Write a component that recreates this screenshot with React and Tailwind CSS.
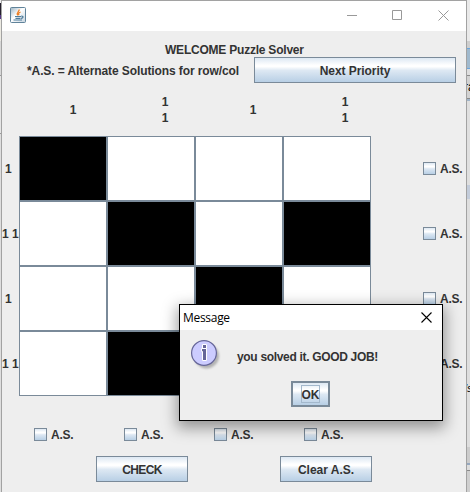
import React from "react";

const BOARD = [
  { clue: "1", cells: [1, 0, 0, 0] },
  { clue: "1 1", cells: [0, 1, 0, 1] },
  { clue: "1", cells: [0, 0, 1, 0] },
  { clue: "1 1", cells: [0, 1, 0, 0] },
];

const METAL = "bg-[linear-gradient(180deg,#dde8f3_0%,#ffffff_30%,#ffffff_36%,#dde8f3_52%,#b8cfe5_100%)]";

function Button({ className, children }) {
  return (
    <button className={`flex h-[26px] items-center justify-center border border-[#7a8a99] pt-[2px] leading-[14px] ${METAL} ${className}`}>
      {children}
    </button>
  );
}

function AltCheck() {
  return (
    <label className="flex h-[13px] items-center gap-1">
      <span className={`block size-[13px] shrink-0 border border-[#7a8a99] ${METAL}`} />
      <span className="pt-[2px] leading-[13px] tracking-[-0.25px]">A.S.</span>
    </label>
  );
}

function JavaIcon() {
  return (
    <svg width="16" height="16" viewBox="0 0 16 16" fill="none">
      <defs>
        <linearGradient id="java" x1="0" y1="0" x2="1" y2="1">
          <stop offset="0" stopColor="#9db4c3" />
          <stop offset=".45" stopColor="#ffffff" />
          <stop offset="1" stopColor="#c3d2dd" />
        </linearGradient>
      </defs>
      <rect x=".5" y=".5" width="15" height="15" rx="1" fill="url(#java)" stroke="#60839a" />
      <path d="M9.2 2.5C9.5 4.6 5.8 5.2 7.8 8.4M10.6 5C8.5 5.8 8.2 6.6 9 8.3" stroke="#ed8128" strokeWidth="1.3" />
      <path d="M5 9.5h6M5.5 11.3h5M11.3 9.2c2.7-.3 2 2-.3 2.2M3.5 13h8.5" stroke="#4f7d9b" strokeWidth="1.2" />
    </svg>
  );
}

function InfoIcon() {
  return (
    <svg width="32" height="32" viewBox="0 0 32 32">
      <defs>
        <filter id="soft" x="-20%" y="-20%" width="150%" height="150%">
          <feGaussianBlur stdDeviation="1.2" />
        </filter>
      </defs>
      <circle cx="15.5" cy="16" r="12.5" fill="#8b8b8b" opacity=".6" filter="url(#soft)" />
      <circle cx="13" cy="13" r="12.4" fill="#ccccff" stroke="#666699" strokeWidth="1.2" />
      <path d="M11.5 4.5h4v4h-4zM10.5 8.5h5v12h-4v-9h-1z" fill="#666699" stroke="#fff" />
    </svg>
  );
}

function MessageDialog() {
  return (
    <div className="absolute left-[179px] top-[304px] flex h-[117px] w-[264px] flex-col border border-black bg-[#eeeeee] shadow-[0_5px_14px_2px_rgba(0,0,0,0.38)]">
      <div className="flex h-[25px] items-center justify-between bg-white pl-[3px] pr-[10px]">
        <span className="font-['Open_Sans','Noto_Sans',sans-serif] text-[12px] font-normal tracking-[-0.3px] text-black">Message</span>
        <svg width="11" height="11" viewBox="0 0 11 11" stroke="#000" strokeWidth="1.1">
          <path d="M.5.5l10 10M10.5.5l-10 10" />
        </svg>
      </div>
      <div className="flex h-[51px] pl-[11px] pt-[10px]">
        <InfoIcon />
        <span className="ml-[14px] mt-[10px] h-[14px] leading-[14px] tracking-[-0.32px]">you solved it. GOOD JOB!</span>
      </div>
      <div className="flex pl-[111px]">
        <button className={`flex h-[26px] w-[39px] items-center justify-center border-2 border-[#7a8a99] ${METAL}`}>
          <span className="flex h-[18px] w-[19px] items-center justify-center border border-[#a3b8cc] pt-[2px] leading-[14px]">OK</span>
        </button>
      </div>
    </div>
  );
}

export default function App() {
  return (
    <div className="relative flex h-[492px] w-[470px] overflow-hidden whitespace-nowrap bg-[#dedede] font-['Liberation_Sans',Arial,sans-serif] text-[12px] font-bold text-[#333333]">
      <div className="flex w-px shrink-0 flex-col">
        <div className="h-[3px] bg-[#eeeeee]" />
        <div className="h-[12px] bg-[#25202d]" />
        <div className="h-[4px] bg-[#563888]" />
        <div className="h-[22px] bg-[#eceae2]" />
        <div className="h-[34px] bg-[#d7d7d7]" />
        <div className="h-px bg-[#999999]" />
        <div className="h-[57px] bg-[#e5e5e5]" />
        <div className="h-px bg-[#999999]" />
      </div>

      <div className="flex h-[493px] w-[466px] shrink-0 flex-col border border-[#a2a2a2] bg-[#eeeeee]">
        <div className="flex h-[30px] shrink-0 items-start bg-white pl-2 pt-[6px]">
          <JavaIcon />
          <svg className="ml-[321px] mt-[3px]" width="102" height="11" viewBox="0 0 102 11" fill="none" stroke="#999" strokeWidth="1">
            <path d="M0 5.5h10M45.5.5h9v9h-9zM91.5.5l10 10M101.5.5l-10 10" />
          </svg>
        </div>

        <div className="flex h-[26px] shrink-0 items-end pl-[163px]">
          <span className="leading-[14px] tracking-[-0.22px]">WELCOME Puzzle Solver</span>
        </div>
        <div className="flex h-[26px] shrink-0 items-center pl-[25px]">
          <span className="w-[227px] pt-[2px] leading-[14px] tracking-[-0.1px]">*A.S. = Alternate Solutions for row/col</span>
          <Button className="w-[202px] tracking-[-0.05px]">Next Priority</Button>
        </div>

        <div className="flex h-[53px] shrink-0 items-center pl-[27px] text-center leading-[16px]">
          <div className="w-[88px]">1</div>
          <div className="w-[96px]">1<br />1</div>
          <div className="w-[80px]">1</div>
          <div className="w-[104px]">1<br />1</div>
        </div>

        <div className="flex shrink-0 flex-col">
          {BOARD.map((row, r) => (
            <div key={r} className="flex h-[65px] items-center">
              <div className={`w-[17px] ${row.clue === "1" ? "pl-[3px]" : "pl-0"}`}>{row.clue}</div>
              {row.cells.map((on, c) => (
                <div key={c} className={`h-[65px] w-[88px] border border-[#7a8a99] ${on ? "bg-black" : "bg-white"}`} />
              ))}
              <div className="ml-[52px]"><AltCheck /></div>
            </div>
          ))}
        </div>

        <div className="flex shrink-0 pl-8 pt-8">
          {[0, 1, 2, 3].map((c) => (
            <div key={c} className="w-[90px]"><AltCheck /></div>
          ))}
        </div>
        <div className="flex shrink-0 gap-[92px] pl-[94px] pt-[15px]">
          <Button className="w-[92px] tracking-[-0.6px]">CHECK</Button>
          <Button className="w-[92px]">Clear A.S.</Button>
        </div>
      </div>

      <div className="flex w-[3px] shrink-0 flex-col overflow-hidden">
        <div className="h-[41px] shrink-0 bg-[#e9e9e9]" />
        <div className="h-[7px] shrink-0 bg-[#cecece]" />
        <div className="h-[21px] shrink-0 border-y border-[#6ba5dc] bg-[#a0b9cd]" />
        <div className="h-[6px] shrink-0 bg-[#dedede]" />
        <div className="flex h-[24px] shrink-0 items-center border-y border-[#8b8b8b] bg-[#d2d2d2] font-normal text-black">
          <span className="-ml-[3px]">ra</span>
        </div>
        <div className="h-[2px] shrink-0 bg-[#a0b4c8]" />
        <div className="h-[84px] shrink-0 bg-[#dfdfdf]" />
        <div className="h-[14px] shrink-0 bg-[#c3ccda]" />
        <div className="h-[181px] shrink-0 bg-[#dedede]" />
        <div className="h-[16px] shrink-0 bg-[#dedede] text-[11px] font-normal italic leading-[16px] text-black">
          <span className="-ml-[2px]">'s</span>
        </div>
        <div className="h-[51px] shrink-0 bg-[#dedede]" />
        <div className="h-[16px] shrink-0 bg-[#cccccc]" />
        <div className="h-[2px] shrink-0 bg-[#96a8bf]" />
        <div className="h-[6px] shrink-0 border-b border-[#8b8b8b] bg-[#dddddd]" />
        <div className="h-[21px] shrink-0 bg-[#cfcfcf]" />
      </div>

      <MessageDialog />
    </div>
  );
}
